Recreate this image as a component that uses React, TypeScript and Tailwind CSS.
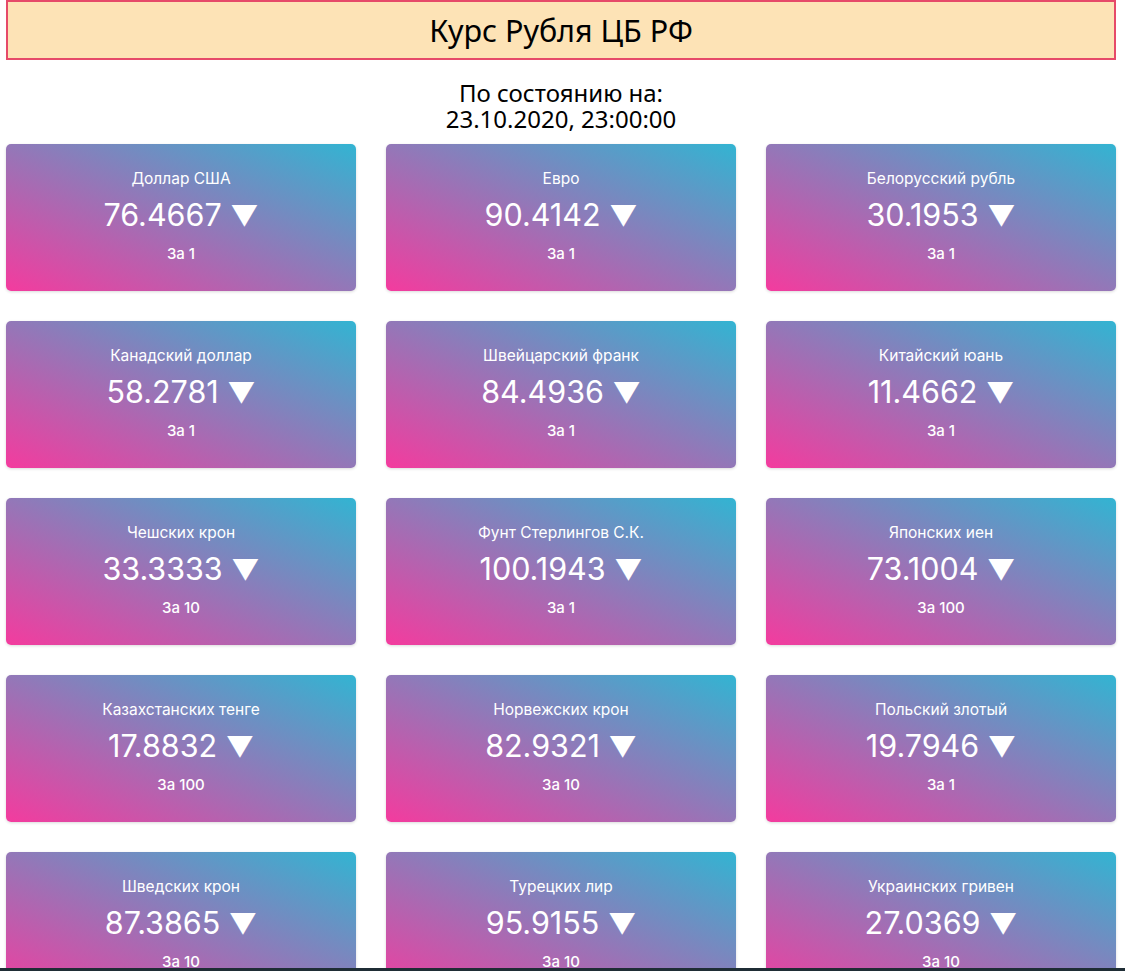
const rates = [
  { name: "Доллар США", value: "76.4667", nominal: 1 },
  { name: "Евро", value: "90.4142", nominal: 1 },
  { name: "Белорусский рубль", value: "30.1953", nominal: 1 },
  { name: "Канадский доллар", value: "58.2781", nominal: 1 },
  { name: "Швейцарский франк", value: "84.4936", nominal: 1 },
  { name: "Китайский юань", value: "11.4662", nominal: 1 },
  { name: "Чешских крон", value: "33.3333", nominal: 10 },
  { name: "Фунт Стерлингов С.К.", value: "100.1943", nominal: 1 },
  { name: "Японских иен", value: "73.1004", nominal: 100 },
  { name: "Казахстанских тенге", value: "17.8832", nominal: 100 },
  { name: "Норвежских крон", value: "82.9321", nominal: 10 },
  { name: "Польский злотый", value: "19.7946", nominal: 1 },
  { name: "Шведских крон", value: "87.3865", nominal: 10 },
  { name: "Турецких лир", value: "95.9155", nominal: 10 },
  { name: "Украинских гривен", value: "27.0369", nominal: 10 },
]

function RateCard({ name, value, nominal }: { name: string; value: string; nominal: number }) {
  return (
    <div className="h-[147px] rounded-[5px] bg-[linear-gradient(to_top_right,#f43b9e,#32b4d2)] shadow-[0_1px_3px_rgba(0,0,0,0.15)] pt-[25px] text-center text-white font-['Inter',sans-serif]">
      <div className="text-[15.5px] leading-[20px]">{name}</div>
      <div className="mt-[8px] text-[30.5px] leading-[36px]">
        {value} <span className="text-[28px]">▼</span>
      </div>
      <div className="mt-[10px] text-[15px] leading-[20px] font-medium">За {nominal}</div>
    </div>
  )
}

export default function App() {
  return (
    <div className="min-h-screen bg-white pl-[6px] font-['Noto_Sans',sans-serif]">
      <div className="w-[1110px]">
        <div className="h-[60px] border-2 border-[#e64a69] bg-[#fde3b6] flex items-center justify-center">
          <h1 className="text-[30.5px] leading-[40px] text-black">Курс Рубля ЦБ РФ</h1>
        </div>
        <div className="mt-[20px] mb-[12px] text-center text-[24px] leading-[26px] text-black">
          <div>По состоянию на:</div>
          <div>23.10.2020, 23:00:00</div>
        </div>
        <div className="grid grid-cols-3 gap-[30px]">
          {rates.map((r) => (
            <RateCard key={r.name} {...r} />
          ))}
        </div>
      </div>
      <div className="fixed bottom-0 left-0 right-0 h-[3px] bg-[#1f2d35]" />
    </div>
  )
}
